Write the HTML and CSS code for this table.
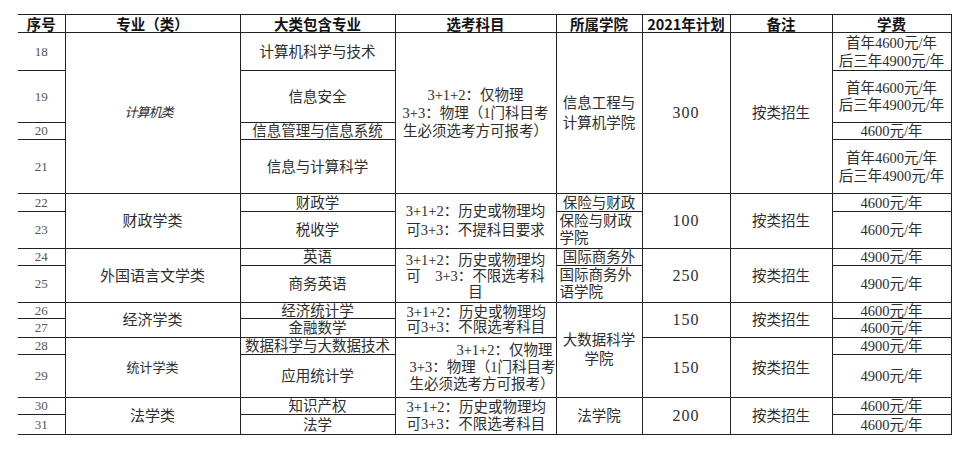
FILE: index.html
```html
<!DOCTYPE html>
<html lang="zh-CN">
<head>
<meta charset="utf-8">
<title>2021年招生计划</title>
<link rel="stylesheet" href="styles.css">
</head>
<body>
<table class="plan">
  <colgroup>
    <col class="c-no"><col class="c-major"><col class="c-sub"><col class="c-exam"><col class="c-college"><col class="c-plan"><col class="c-note"><col class="c-fee">
  </colgroup>
  <thead>
    <tr class="h18"><th>序号</th><th>专业（类）</th><th>大类包含专业</th><th>选考科目</th><th>所属学院</th><th>2021年计划</th><th>备注</th><th>学费</th></tr>
  </thead>
  <tbody>
    <tr class="h38">
      <td class="no">18</td>
      <td rowspan="4" class="major slant">计算机类</td>
      <td>计算机科学与技术</td>
      <td rowspan="4" class="ml18">3+1+2：仅物理<br>3+3：物理（1门科目考<br>生必须选考方可报考）</td>
      <td rowspan="4" class="ml20">信息工程与计算机学院</td>
      <td rowspan="4" class="num">300</td>
      <td rowspan="4">按类招生</td>
      <td class="ml18">首年4600元/年<br>后三年4900元/年</td>
    </tr>
    <tr class="h52"><td class="no">19</td><td>信息安全</td><td class="ml17">首年4600元/年<br>后三年4900元/年</td></tr>
    <tr class="h17"><td class="no">20</td><td>信息管理与信息系统</td><td>4600元/年</td></tr>
    <tr class="h54"><td class="no">21</td><td>信息与计算科学</td><td class="ml18">首年4600元/年<br>后三年4900元/年</td></tr>

    <tr class="h18">
      <td class="no">22</td>
      <td rowspan="2" class="major">财政学类</td>
      <td>财政学</td>
      <td rowspan="2" class="ml19">3+1+2：历史或物理均<br>可3+3：不提科目要求</td>
      <td>保险与财政</td>
      <td rowspan="2" class="num">100</td>
      <td rowspan="2">按类招生</td>
      <td>4600元/年</td>
    </tr>
    <tr class="h37"><td class="no">23</td><td>税收学</td><td class="ml17 left">保险与财政学院</td><td>4600元/年</td></tr>

    <tr class="h17">
      <td class="no">24</td>
      <td rowspan="2" class="major">外国语言文学类</td>
      <td>英语</td>
      <td rowspan="2" class="ml16">3+1+2：历史或物理均<br>可　3+3：不限选考科<br>目</td>
      <td>国际商务外</td>
      <td rowspan="2" class="num">250</td>
      <td rowspan="2">按类招生</td>
      <td>4900元/年</td>
    </tr>
    <tr class="h37"><td class="no">25</td><td>商务英语</td><td class="ml17 left">国际商务外语学院</td><td>4900元/年</td></tr>

    <tr class="h16">
      <td class="no">26</td>
      <td rowspan="2" class="major">经济学类</td>
      <td>经济统计学</td>
      <td rowspan="2" class="ml15 left-pad">3+1+2：历史或物理均<br>可3+3：不限选考科目</td>
      <td rowspan="4" class="ml19">大数据科学学院</td>
      <td rowspan="2" class="num">150</td>
      <td rowspan="2">按类招生</td>
      <td>4600元/年</td>
    </tr>
    <tr class="h19"><td class="no">27</td><td>金融数学</td><td>4600元/年</td></tr>

    <tr class="h17">
      <td class="no">28</td>
      <td rowspan="2" class="major small">统计学类</td>
      <td>数据科学与大数据技术</td>
      <td rowspan="2" class="ml17 left-wide"><span class="line-r">3+1+2：仅物理</span>3+3：物理（1门科目考<br>生必须选考方可报考）</td>
      <td rowspan="2" class="num">150</td>
      <td rowspan="2">按类招生</td>
      <td>4900元/年</td>
    </tr>
    <tr class="h43"><td class="no">29</td><td>应用统计学</td><td>4900元/年</td></tr>

    <tr class="h17">
      <td class="no">30</td>
      <td rowspan="2" class="major">法学类</td>
      <td>知识产权</td>
      <td rowspan="2" class="ml17 left-pad">3+1+2：历史或物理均<br>可3+3：不限选考科目</td>
      <td rowspan="2">法学院</td>
      <td rowspan="2" class="num">200</td>
      <td rowspan="2">按类招生</td>
      <td>4600元/年</td>
    </tr>
    <tr class="h20"><td class="no">31</td><td>法学</td><td>4600元/年</td></tr>
  </tbody>
</table>
</body>
</html>
```

FILE: styles.css
```css
html, body {
  margin: 0;
  padding: 0;
  background: #ffffff;
}

body {
  padding: 14px 0 0 18px;
  font-family: "Liberation Serif", "Noto Sans CJK SC", serif;
  font-size: 14.5px;
  color: #2e2e2e;
}

.plan {
  border-collapse: collapse;
  table-layout: fixed;
  width: 933px;
}

.c-no { width: 47px; }
.c-major { width: 175px; }
.c-sub { width: 155px; }
.c-exam { width: 161px; }
.c-college { width: 86px; }
.c-plan { width: 88px; }
.c-note { width: 102px; }
.c-fee { width: 119px; }

.plan th,
.plan td {
  border: 1px solid #222222;
  padding: 0;
  text-align: center;
  vertical-align: middle;
  line-height: 14px;
}

.plan tr > :first-child {
  border-left: none;
}

.plan th {
  font-family: "Noto Sans CJK SC", "Liberation Sans", sans-serif;
  font-weight: 700;
  font-size: 14.5px;
  color: #111111;
}

.h16 { height: 16px; }
.h17 { height: 17px; }
.h18 { height: 18px; }
.h19 { height: 19px; }
.h20 { height: 20px; }
.h37 { height: 37px; }
.h38 { height: 38px; }
.h43 { height: 43px; }
.h52 { height: 52px; }
.h54 { height: 54px; }

.plan td.no {
  font-size: 13px;
  color: #555555;
}

.plan td.major { font-size: 15px; }
.plan td.major.small { font-size: 13px; }
.plan td.slant {
  font-style: italic;
  font-size: 13px;
  letter-spacing: -1px;
  padding-right: 8px;
}

.plan td.num {
  font-size: 16px;
  letter-spacing: 1px;
}

.plan td.ml15 { line-height: 15px; }
.plan td.ml16 { line-height: 16px; }
.plan td.ml17 { line-height: 17px; }
.plan td.ml18 { line-height: 18px; }
.plan td.ml19 { line-height: 19px; }
.plan td.ml20 { line-height: 20px; }

.plan td.left {
  text-align: left;
  padding-left: 3px;
}

.plan td.left-pad {
  text-align: left;
  padding-left: 11px;
}

.plan td.left-wide {
  text-align: left;
  padding-left: 14px;
}

.line-r {
  display: block;
  text-align: right;
  padding-right: 3px;
}
```
